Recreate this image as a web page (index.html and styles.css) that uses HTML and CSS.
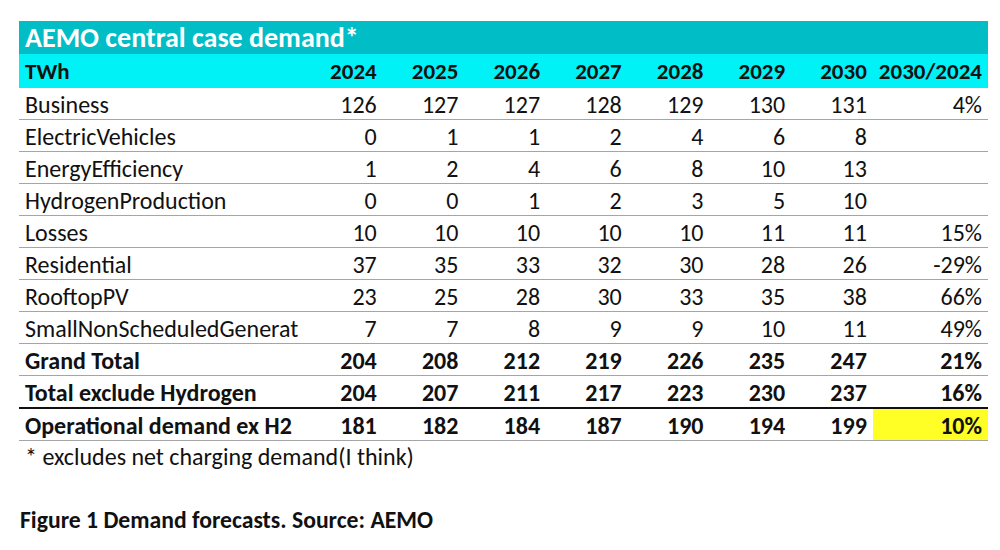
FILE: index.html
```html
<!DOCTYPE html>
<html>
<head>
<meta charset="utf-8">
<link rel="stylesheet" href="styles.css">
</head>
<body>
<div class="page">
  <table class="demand">
    <colgroup>
      <col class="c-label"><col class="c-num"><col class="c-num"><col class="c-num"><col class="c-num"><col class="c-num"><col class="c-num"><col class="c-num"><col class="c-ratio">
    </colgroup>
    <thead>
      <tr class="title"><th colspan="9">AEMO central case demand*</th></tr>
      <tr class="head"><th class="lbl">TWh</th><th>2024</th><th>2025</th><th>2026</th><th>2027</th><th>2028</th><th>2029</th><th>2030</th><th>2030/2024</th></tr>
    </thead>
    <tbody>
      <tr><td class="lbl">Business</td><td>126</td><td>127</td><td>127</td><td>128</td><td>129</td><td>130</td><td>131</td><td>4%</td></tr>
      <tr><td class="lbl">ElectricVehicles</td><td>0</td><td>1</td><td>1</td><td>2</td><td>4</td><td>6</td><td>8</td><td></td></tr>
      <tr><td class="lbl">EnergyEfficiency</td><td>1</td><td>2</td><td>4</td><td>6</td><td>8</td><td>10</td><td>13</td><td></td></tr>
      <tr><td class="lbl">HydrogenProduction</td><td>0</td><td>0</td><td>1</td><td>2</td><td>3</td><td>5</td><td>10</td><td></td></tr>
      <tr><td class="lbl">Losses</td><td>10</td><td>10</td><td>10</td><td>10</td><td>10</td><td>11</td><td>11</td><td>15%</td></tr>
      <tr><td class="lbl">Residential</td><td>37</td><td>35</td><td>33</td><td>32</td><td>30</td><td>28</td><td>26</td><td>-29%</td></tr>
      <tr><td class="lbl">RooftopPV</td><td>23</td><td>25</td><td>28</td><td>30</td><td>33</td><td>35</td><td>38</td><td>66%</td></tr>
      <tr><td class="lbl">SmallNonScheduledGenerat</td><td>7</td><td>7</td><td>8</td><td>9</td><td>9</td><td>10</td><td>11</td><td>49%</td></tr>
      <tr class="bold"><td class="lbl">Grand Total</td><td>204</td><td>208</td><td>212</td><td>219</td><td>226</td><td>235</td><td>247</td><td>21%</td></tr>
      <tr class="bold"><td class="lbl">Total exclude Hydrogen</td><td>204</td><td>207</td><td>211</td><td>217</td><td>223</td><td>230</td><td>237</td><td>16%</td></tr>
      <tr class="bold op"><td class="lbl">Operational demand ex H2</td><td>181</td><td>182</td><td>184</td><td>187</td><td>190</td><td>194</td><td>199</td><td class="hl">10%</td></tr>
    </tbody>
  </table>
  <p class="note">* excludes net charging demand(I think)</p>
  <p class="caption">Figure 1 Demand forecasts. Source: AEMO</p>
</div>
</body>
</html>
```

FILE: styles.css
```css
html, body {
  margin: 0;
  padding: 0;
  background: #ffffff;
}
body {
  font-family: Carlito, Calibri, Lato, "Liberation Sans", sans-serif;
  color: #111;
}
.page {
  padding: 21px 0 0 19px;
}
.demand {
  border-collapse: collapse;
  table-layout: fixed;
  width: 969px;
  font-size: 24px;
}
.c-label { width: 282px; }
.c-num { width: 81.7px; }
.c-ratio { width: 115px; }
.demand th, .demand td {
  padding: 0 6px 0 6px;
  text-align: right;
  white-space: nowrap;
  overflow: hidden;
}
.demand .lbl { text-align: left; }
.title th {
  background: #00bdc6;
  color: #fff;
  font-size: 28px;
  font-weight: 700;
  text-align: left;
  height: 33px;
  line-height: 33px;
}
.head th {
  background: #00f2f6;
  color: #111;
  font-size: 23px;
  font-weight: 700;
  height: 33px;
  line-height: 34px;
}
.demand tbody td {
  border-bottom: 1px solid #a5a5a5;
  height: 29px;
  padding-top: 2px;
  line-height: 29px;
}
.bold td { font-weight: 700; }
.op td { border-top: 2px solid #111; }
.demand td.hl { background: #ffff26; }
.note {
  margin: 0 0 0 6px;
  font-size: 24px;
  line-height: 32px;
}
.caption {
  margin: 32px 0 0 1px;
  font-size: 23.7px;
  font-weight: 700;
  line-height: 30px;
}
```
